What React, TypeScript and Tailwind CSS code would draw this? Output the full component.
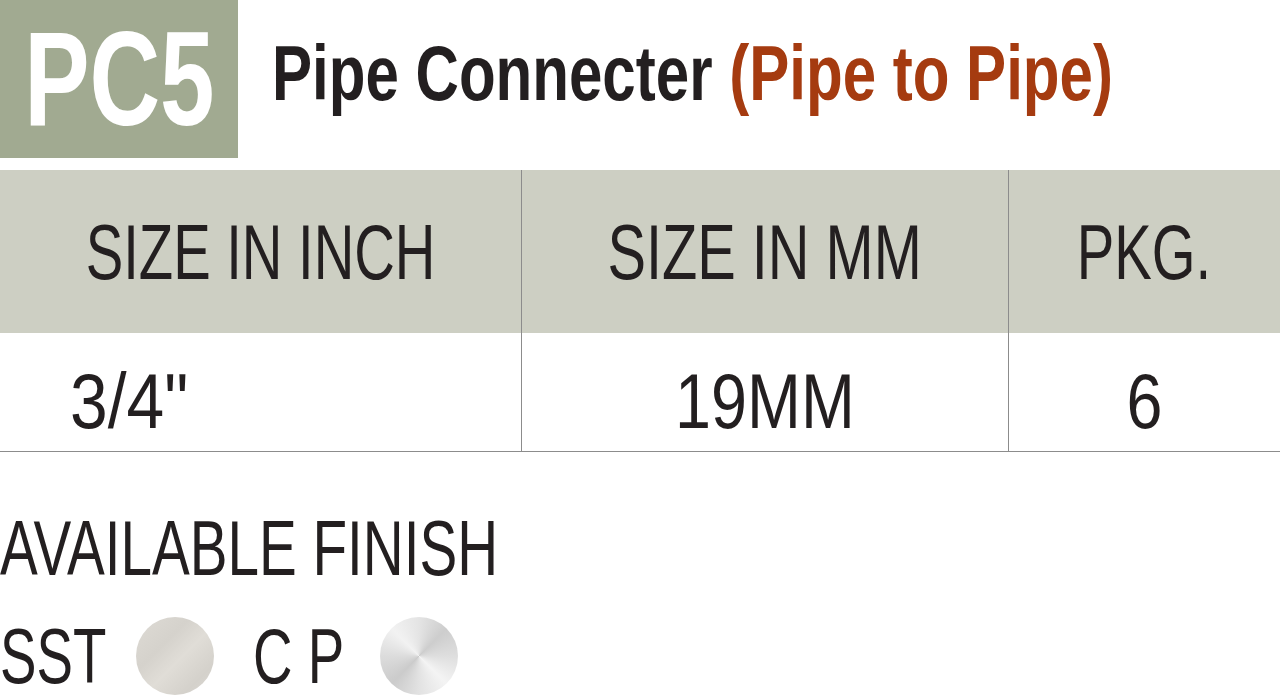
import React from 'react';

const font = { fontFamily: "'Liberation Sans', Arial, sans-serif" };

// condensed look: Liberation Sans squeezed horizontally
const Narrow: React.FC<{ className?: string; children: React.ReactNode }> = ({ className = '', children }) => (
  <span className={`inline-block whitespace-nowrap ${className}`}>{children}</span>
);

const App: React.FC = () => {
  return (
    <div className="w-[1280px] h-[695px] bg-white overflow-hidden text-[#231f20]" style={font}>
      {/* title */}
      <div className="flex items-start h-[158px]">
        <div className="w-[238px] h-full bg-[#a1aa91] flex items-center justify-center shrink-0">
          <Narrow className="text-white font-bold text-[134px] leading-none scale-x-[0.73] origin-center">PC5</Narrow>
        </div>
        <div className="ml-[34px] pt-[35px] font-bold text-[77px] leading-none">
          <Narrow className="scale-x-[0.78] origin-left">
            Pipe Connecter <span className="text-[#a53b10]">(Pipe to Pipe)</span>
          </Narrow>
        </div>
      </div>

      {/* table */}
      <div className="mt-[12px] grid grid-cols-[522px_487px_1fr] border-b border-[#8c8c8c]">
        <div className="h-[163px] bg-[#cdcfc3] border-r border-[#8c8c8c] pt-[44px] flex justify-center text-[77px] leading-none">
          <Narrow className="scale-x-[0.73]">SIZE IN INCH</Narrow>
        </div>
        <div className="h-[163px] bg-[#cdcfc3] border-r border-[#8c8c8c] pt-[44px] flex justify-center text-[77px] leading-none">
          <Narrow className="scale-x-[0.75]">SIZE IN MM</Narrow>
        </div>
        <div className="h-[163px] bg-[#cdcfc3] pt-[44px] flex justify-center text-[77px] leading-none">
          <Narrow className="scale-x-[0.73]">PKG.</Narrow>
        </div>
        <div className="h-[118px] border-r border-[#8c8c8c] pt-[30px] pl-[70px] text-[77px] leading-none">
          <Narrow className="scale-x-[0.88] origin-left">3/4"</Narrow>
        </div>
        <div className="h-[118px] border-r border-[#8c8c8c] pt-[30px] flex justify-center text-[77px] leading-none">
          <Narrow className="scale-x-[0.84]">19MM</Narrow>
        </div>
        <div className="h-[118px] pt-[30px] flex justify-center text-[77px] leading-none">
          <Narrow className="scale-x-[0.84]">6</Narrow>
        </div>
      </div>

      {/* finishes */}
      <div className="mt-[58px] text-[77px] leading-none">
        <Narrow className="scale-x-[0.735] origin-left">AVAILABLE FINISH</Narrow>
      </div>
      <div className="mt-[30px] flex items-start text-[77px] leading-none">
        <div className="w-[136px] pt-[1px]">
          <Narrow className="scale-x-[0.71] origin-left">SST</Narrow>
        </div>
        <div className="w-[78px] h-[78px] rounded-full bg-[linear-gradient(135deg,#dedbd5_0%,#d5d2cc_35%,#e0ddd7_55%,#d4d1cb_80%,#dcd9d3_100%)]" />
        <div className="w-[166px] pl-[39px] pt-[1px]">
          <Narrow className="scale-x-[0.71] origin-left">C P</Narrow>
        </div>
        <div className="w-[78px] h-[78px] rounded-full bg-[conic-gradient(#e4e4e4,#cdcdcd,#dedede,#f4f4f4,#e2e2e2,#cbcbcb,#dcdcdc,#f2f2f2,#e4e4e4)]" />
      </div>
    </div>
  );
};

export default App;
